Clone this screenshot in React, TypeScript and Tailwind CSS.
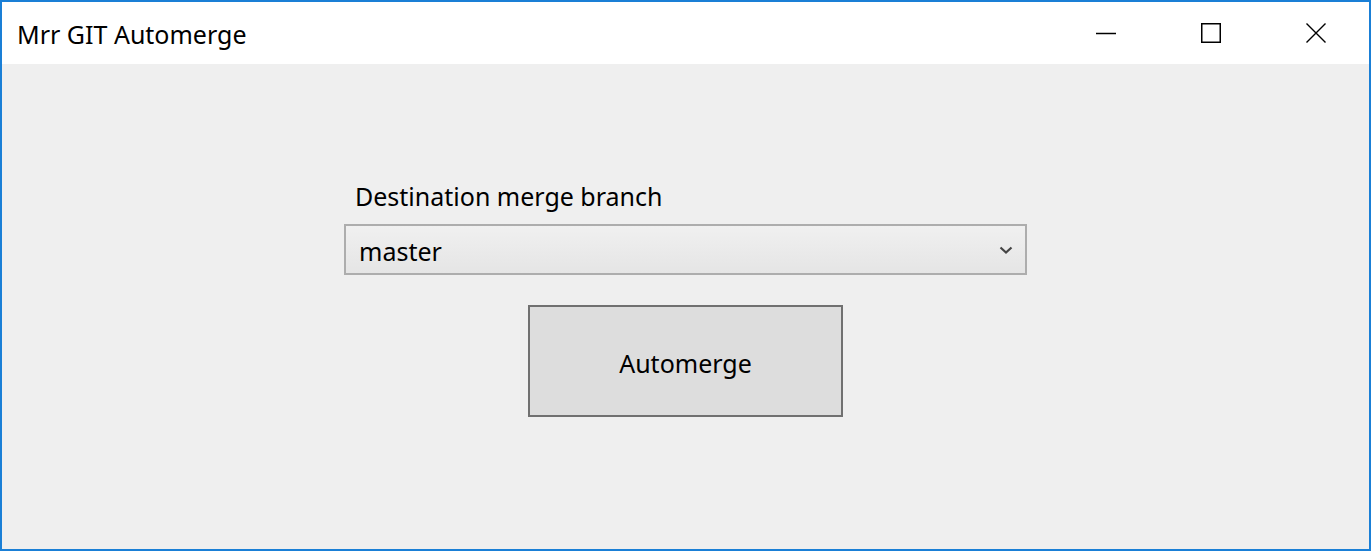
export default function App() {
  return (
    <div className="flex h-[551px] w-[1371px] flex-col border-2 border-[#1a7fd6] bg-[#efefef] font-['Noto_Sans',sans-serif] text-black">
      <header className="flex h-[62px] shrink-0 items-center bg-white">
        <h1 className="ml-[15px] flex-1 pt-[2px] text-[25px] leading-none">Mrr GIT Automerge</h1>
        <div className="flex h-full items-center">
          <button className="flex h-full w-[105px] items-center justify-center">
            <svg width="22" height="22" viewBox="0 0 22 22">
              <path d="M1 11.5h20" stroke="#000" strokeWidth="1.5" />
            </svg>
          </button>
          <button className="flex h-full w-[105px] items-center justify-center">
            <svg width="22" height="22" viewBox="0 0 22 22">
              <rect x="1.75" y="1.75" width="18.5" height="18.5" fill="none" stroke="#000" strokeWidth="1.5" />
            </svg>
          </button>
          <button className="flex h-full w-[106px] items-center justify-center">
            <svg width="22" height="22" viewBox="0 0 22 22">
              <path d="M1.5 1.5l19 19M20.5 1.5l-19 19" stroke="#000" strokeWidth="1.4" />
            </svg>
          </button>
        </div>
      </header>

      <main className="flex flex-1 flex-col items-center pt-[118px]">
        <div className="w-[683px]">
          <label className="ml-[11px] block text-[25px] leading-[28px]">Destination merge branch</label>
          <div className="mt-[14px] flex h-[51px] items-center justify-between border-2 border-[#adadad] bg-gradient-to-b from-[#f0f0f0] to-[#e5e5e5] pl-[13px] pr-[12px]">
            <span className="pt-[3px] text-[25px] leading-none">master</span>
            <svg width="14" height="10" viewBox="0 0 14 10">
              <path d="M1.5 2.5l5.5 5 5.5-5" fill="none" stroke="#444" strokeWidth="2.2" />
            </svg>
          </div>
        </div>
        <button className="mt-[30px] flex h-[112px] w-[315px] items-center justify-center border-2 border-[#707070] bg-[#dddddd] pt-[4px] text-[25px] leading-none">
          Automerge
        </button>
      </main>
    </div>
  );
}
